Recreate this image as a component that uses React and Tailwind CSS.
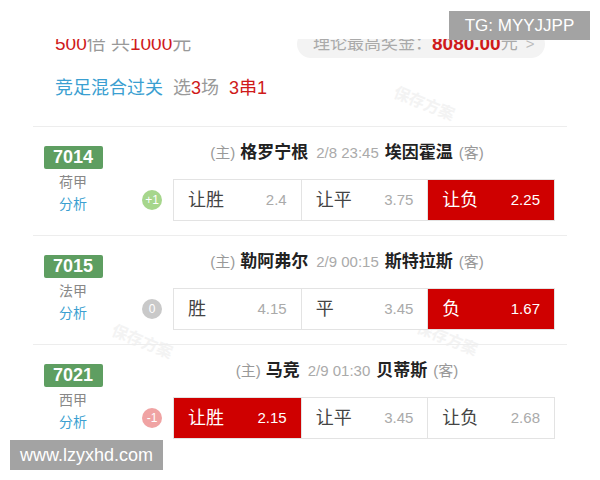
import React from "react";

const matches = [
  {
    no: "7014",
    league: "荷甲",
    home: "格罗宁根",
    away: "埃因霍温",
    time: "2/8 23:45",
    handicap: "+1",
    dot: "bg-[#a6d68c]",
    odds: [
      { label: "让胜", value: "2.4" },
      { label: "让平", value: "3.75" },
      { label: "让负", value: "2.25", on: true },
    ],
  },
  {
    no: "7015",
    league: "法甲",
    home: "勒阿弗尔",
    away: "斯特拉斯",
    time: "2/9 00:15",
    handicap: "0",
    dot: "bg-[#c9c9c9]",
    odds: [
      { label: "胜", value: "4.15" },
      { label: "平", value: "3.45" },
      { label: "负", value: "1.67", on: true },
    ],
  },
  {
    no: "7021",
    league: "西甲",
    home: "马竞",
    away: "贝蒂斯",
    time: "2/9 01:30",
    handicap: "-1",
    dot: "bg-[#f0a3a3]",
    odds: [
      { label: "让胜", value: "2.15", on: true },
      { label: "让平", value: "3.45" },
      { label: "让负", value: "2.68" },
    ],
  },
];

// faint "保存方案" watermarks
const marks = [
  { top: "top-[92px]", left: "left-[392px]" },
  { top: "top-[330px]", left: "left-[110px]" },
  { top: "top-[327px]", left: "left-[415px]" },
];

const MatchRow = ({ m, last }) => (
  <div className={`flex ${last ? "h-[135px]" : "h-[109px] border-b border-[#ededed]"}`}>
    <div className="w-[80px] flex flex-col items-center pt-[19px]">
      <div className="w-[59px] h-[23px] rounded-[2px] bg-[#5e9e61] text-white font-bold text-[18px] leading-[23px] text-center">
        {m.no}
      </div>
      <div className="mt-[2px] text-[14px] leading-[22px] text-[#888]">{m.league}</div>
      <div className="text-[14px] leading-[22px] text-[#3b9fd1]">分析</div>
    </div>
    <div className="flex-1 flex flex-col pt-[14px]">
      <div className="ml-[26px] mr-[12px] h-[24px] flex items-center justify-center whitespace-nowrap">
        <span className="text-[15px] text-[#999]">(主)</span>
        <span className="ml-[5px] text-[17px] font-bold text-[#222]">{m.home}</span>
        <span className="ml-[8px] text-[15px] text-[#aaa]">{m.time}</span>
        <span className="ml-[6px] text-[17px] font-bold text-[#222]">{m.away}</span>
        <span className="ml-[6px] text-[15px] text-[#999]">(客)</span>
      </div>
      <div className="mt-[14px] flex items-center">
        <div className={`ml-[29px] w-[20px] h-[20px] rounded-full ${m.dot} text-white text-[12px] leading-[20px] text-center`}>
          {m.handicap}
        </div>
        <div className="ml-[11px] w-[382px] h-[42px] grid grid-cols-3 border border-[#e3e3e3] bg-white">
          {m.odds.map((o, i) => (
            <div
              key={i}
              className={`flex items-center justify-between pl-[14px] pr-[14px] ${
                i > 0 ? "border-l border-[#e3e3e3]" : ""
              } ${o.on ? "bg-[#cf0000] text-white" : "text-[#444]"}`}
            >
              <span className="text-[18px]">{o.label}</span>
              <span className={`text-[15px] ${o.on ? "text-white" : "text-[#aaa]"}`}>{o.value}</span>
            </div>
          ))}
        </div>
      </div>
    </div>
  </div>
);

const App = () => {
  return (
    <div
      className="relative w-[600px] h-[480px] overflow-hidden bg-white"
      style={{ fontFamily: '"Liberation Sans", "Noto Sans CJK SC", sans-serif' }}
    >
      {marks.map((w, i) => (
        <div
          key={i}
          className={`absolute ${w.top} ${w.left} rotate-[22deg] text-[16px] font-bold text-[#f3f3f3] select-none`}
        >
          保存方案
        </div>
      ))}

      <div className="relative px-[33px]">
        <div className="h-[39px]" />
        <div className="h-[20px] overflow-hidden">
          <div className="-mt-[9px] flex items-center justify-between pl-[22px] pr-[22px]">
            <div className="text-[19px] leading-[28px] whitespace-nowrap">
              <span className="text-[#cf1a1a]">500</span>
              <span className="text-[#999]">倍 共</span>
              <span className="text-[#cf1a1a]">1000</span>
              <span className="text-[#999]">元</span>
            </div>
            <div className="h-[28px] w-[248px] rounded-full bg-[#f3f3f3] flex items-center pl-[16px] whitespace-nowrap">
              <span className="text-[#aaa] text-[17px]">理论最高奖金：</span>
              <span className="text-[#cf1a1a] font-bold text-[19px]">8080.00</span>
              <span className="text-[#aaa] text-[17px]">元</span>
              <span className="ml-[8px] text-[#bbb] text-[15px]">&gt;</span>
            </div>
          </div>
        </div>
        <div className="mt-[18px] pl-[22px] h-[22px] flex items-center text-[18px] whitespace-nowrap">
          <span className="text-[#3b9fd1]">竞足混合过关</span>
          <span className="ml-[10px] text-[#999]">选</span>
          <span className="text-[#cf1a1a]">3</span>
          <span className="text-[#999]">场</span>
          <span className="ml-[10px] text-[#cf1a1a]">3串1</span>
        </div>
        <div className="mt-[27px] border-t border-[#ededed]">
          {matches.map((m, i) => (
            <MatchRow key={m.no} m={m} last={i === matches.length - 1} />
          ))}
        </div>
      </div>

      <div className="absolute top-[11px] left-[449px] w-[141px] h-[29px] bg-[#a3a3a3] text-white text-[17px] leading-[29px] text-center">
        TG: MYYJJPP
      </div>
      <div className="absolute top-[440px] left-[10px] w-[153px] h-[30px] bg-[#a3a3a3] text-white text-[18px] leading-[30px] text-center">
        www.lzyxhd.com
      </div>
    </div>
  );
};

export default App;
